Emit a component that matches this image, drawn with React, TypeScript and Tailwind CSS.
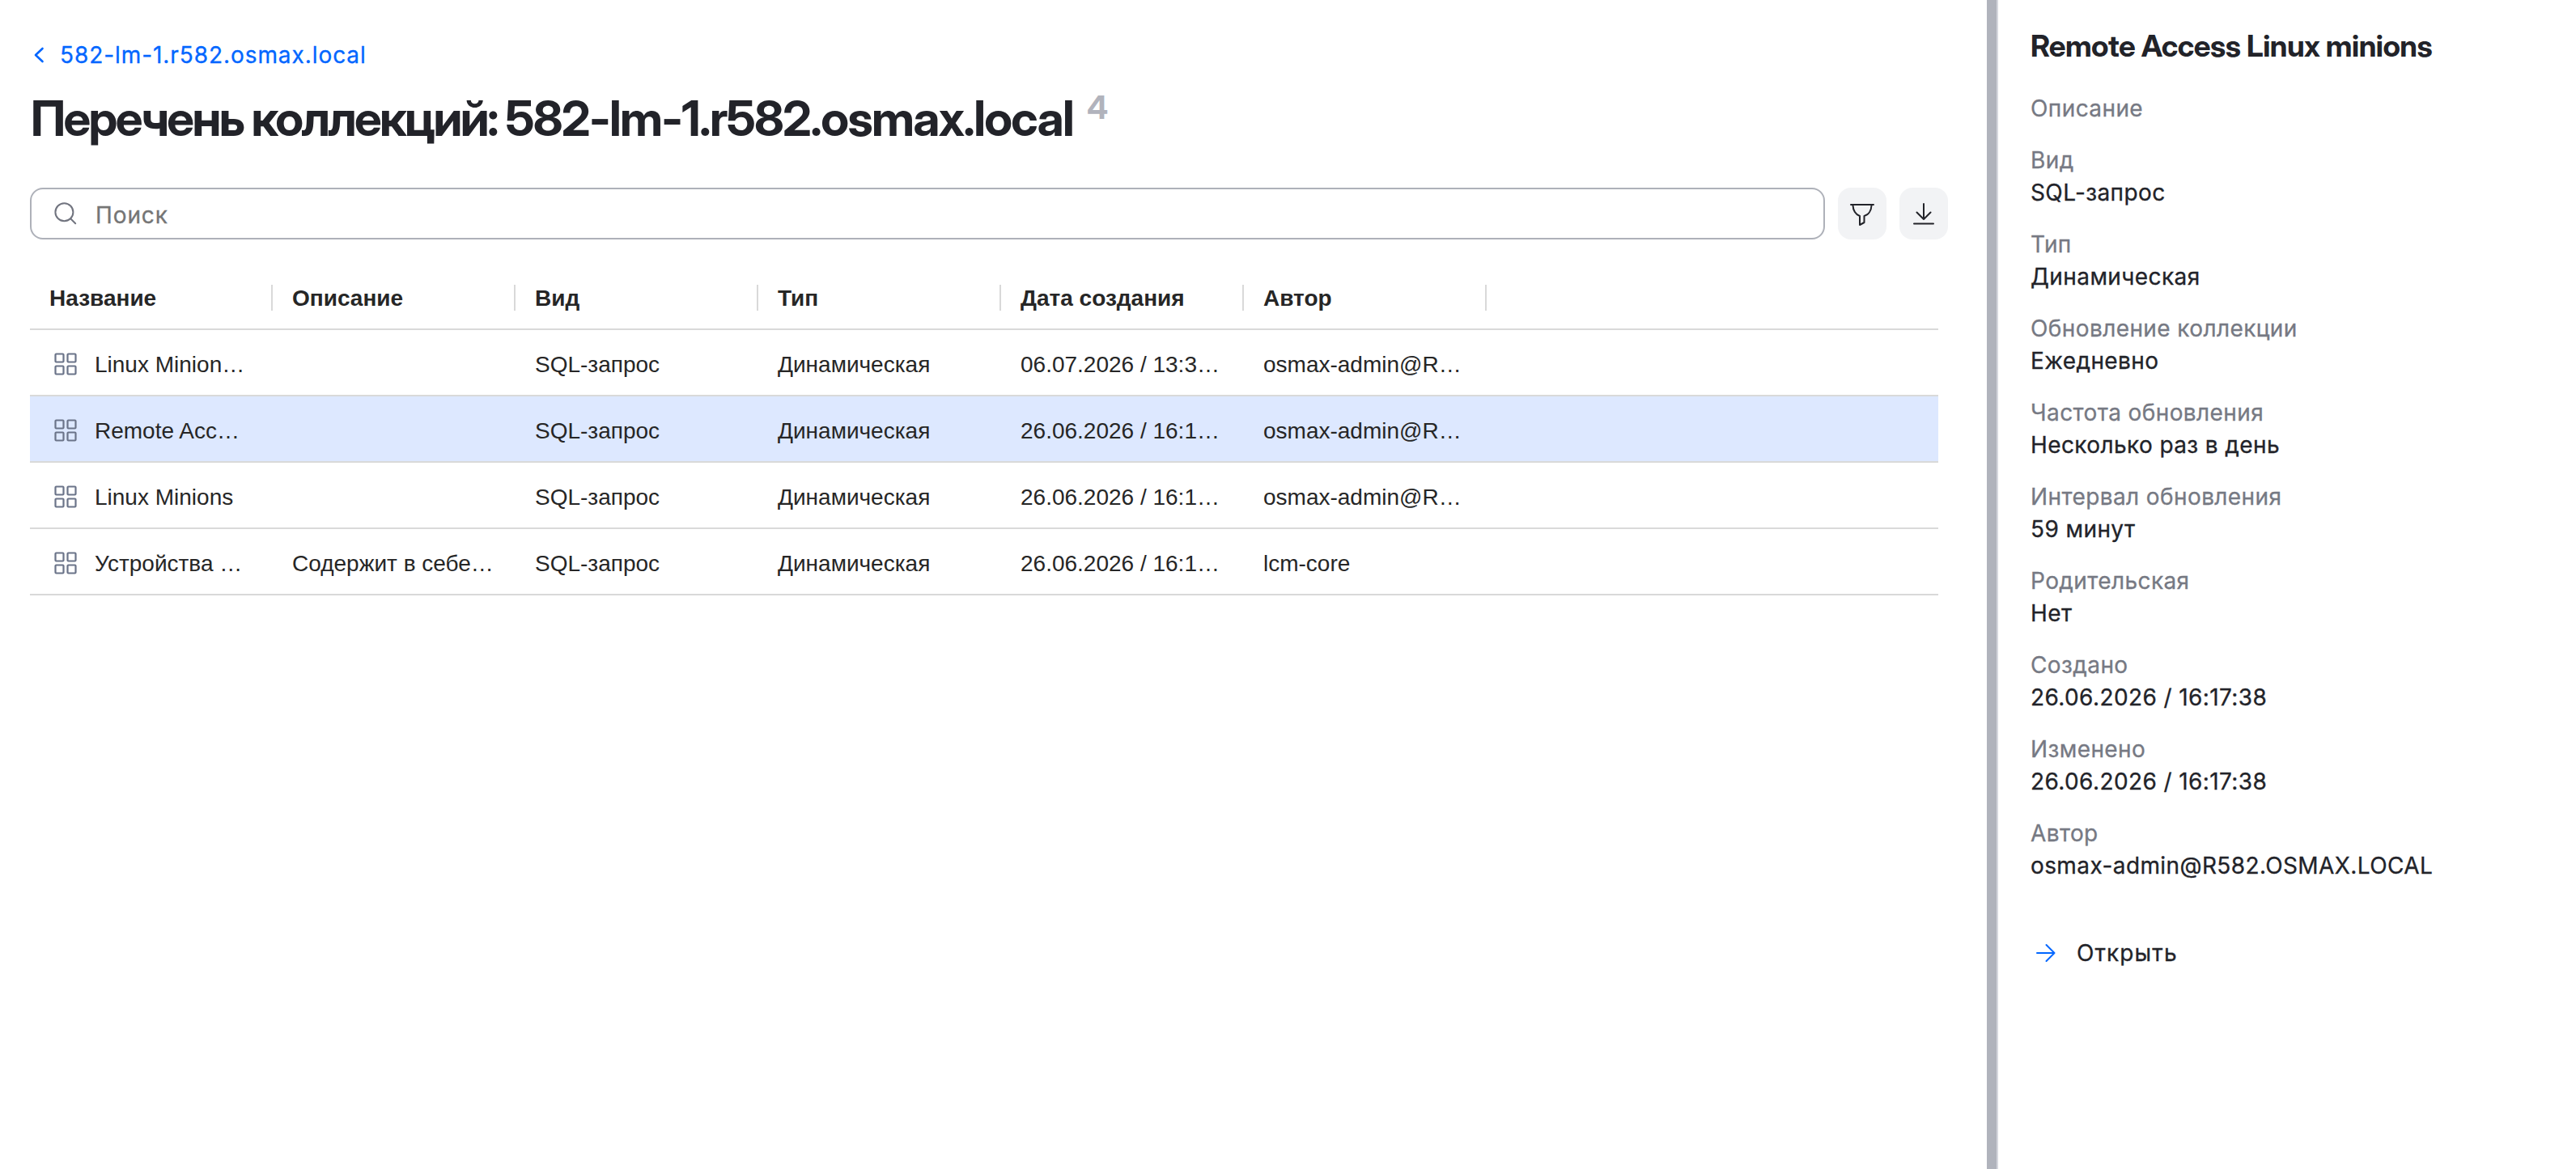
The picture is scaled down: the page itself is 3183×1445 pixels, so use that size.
import React from 'react';

interface Collection {
  name: string;
  description: string;
  kind: string;
  type: string;
  created: string;
  author: string;
}

const columns = ['Название', 'Описание', 'Вид', 'Тип', 'Дата создания', 'Автор'];

const collections: Collection[] = [
  { name: 'Linux Minion…', description: '', kind: 'SQL-запрос', type: 'Динамическая', created: '06.07.2026 / 13:3…', author: 'osmax-admin@R…' },
  { name: 'Remote Acc…', description: '', kind: 'SQL-запрос', type: 'Динамическая', created: '26.06.2026 / 16:1…', author: 'osmax-admin@R…' },
  { name: 'Linux Minions', description: '', kind: 'SQL-запрос', type: 'Динамическая', created: '26.06.2026 / 16:1…', author: 'osmax-admin@R…' },
  { name: 'Устройства …', description: 'Содержит в себе…', kind: 'SQL-запрос', type: 'Динамическая', created: '26.06.2026 / 16:1…', author: 'lcm-core' },
];

const details = [
  { label: 'Описание', value: '' },
  { label: 'Вид', value: 'SQL-запрос' },
  { label: 'Тип', value: 'Динамическая' },
  { label: 'Обновление коллекции', value: 'Ежедневно' },
  { label: 'Частота обновления', value: 'Несколько раз в день' },
  { label: 'Интервал обновления', value: '59 минут' },
  { label: 'Родительская', value: 'Нет' },
  { label: 'Создано', value: '26.06.2026 / 16:17:38' },
  { label: 'Изменено', value: '26.06.2026 / 16:17:38' },
  { label: 'Автор', value: 'osmax-admin@R582.OSMAX.LOCAL' },
];

const SELECTED = 1;

const ChevronIcon = () => (
  <svg className="w-4 h-6" viewBox="0 0 16 24" fill="none" stroke="currentColor" strokeWidth="2.6" strokeLinecap="round" strokeLinejoin="round">
    <path d="M12.500 4L4 12l8.500 8" />
  </svg>
);

const SearchIcon = () => (
  <svg className="w-8 h-8 text-[#71747f]" viewBox="0 0 32 32" fill="none" stroke="currentColor" strokeWidth="2" strokeLinecap="round">
    <circle cx="14.4" cy="14.2" r="11" />
    <path d="M22.2 22.2l6 6" />
  </svg>
);

const FilterIcon = () => (
  <svg className="w-8 h-8" viewBox="0 0 32 32" fill="none" stroke="currentColor" strokeWidth="2" strokeLinecap="round" strokeLinejoin="round">
    <path d="M2 5H30M4.500 5C4.500 12 8 17.500 13 19V30L18.500 27V19C24 17.500 27.500 12 27.500 5" />
  </svg>
);

const DownloadIcon = () => (
  <svg className="w-8 h-8" viewBox="0 0 32 32" fill="none" stroke="currentColor" strokeWidth="2" strokeLinecap="round" strokeLinejoin="round">
    <path d="M16 4v19M7.500 14.500L16 23l8.500-8.500M4 28.500h24" />
  </svg>
);

const GridIcon = () => (
  <svg className="-mt-0.5 w-8 h-8 shrink-0 text-[#6b7489]" viewBox="0 0 32 32" fill="none" stroke="currentColor" strokeWidth="2.2">
    <rect x="3.500" y="3.500" width="10" height="10" rx="1" />
    <rect x="18.500" y="3.500" width="10" height="10" rx="1" />
    <rect x="3.500" y="18.500" width="10" height="10" rx="1" />
    <rect x="18.500" y="18.500" width="10" height="10" rx="1" />
  </svg>
);

const ArrowIcon = () => (
  <svg className="w-8 h-8 text-[#0066ff]" viewBox="0 0 32 32" fill="none" stroke="currentColor" strokeWidth="2" strokeLinecap="round" strokeLinejoin="round">
    <path d="M6 16h21.500M17.500 6l10 10-10 10" />
  </svg>
);

const CollectionsTable: React.FC = () => (
  <div className="mt-8 w-[2358px] font-['Liberation_Sans',sans-serif] text-[28px] leading-10 text-[#262626]">
    <div className="flex h-20 items-center border-b-2 border-[#d9d9d9] pt-0.5 font-bold">
      {columns.map((title) => (
        <div key={title} className="flex h-8 w-[300px] items-center border-r-2 border-[#d9d9d9] pl-6 pt-0.5">
          {title}
        </div>
      ))}
    </div>
    {collections.map((item, index) => (
      <div
        key={index}
        className={`flex h-[82px] items-center whitespace-nowrap border-b-2 border-[#d9d9d9] pt-1.5 ${index === SELECTED ? 'bg-[#dde8ff]' : ''}`}
      >
        <div className="flex w-[300px] items-center pl-7">
          <GridIcon />
          <span className="ml-5">{item.name}</span>
        </div>
        <div className="w-[300px] pl-6">{item.description}</div>
        <div className="w-[300px] pl-6">{item.kind}</div>
        <div className="w-[300px] pl-6">{item.type}</div>
        <div className="w-[300px] pl-6">{item.created}</div>
        <div className="w-[300px] pl-6">{item.author}</div>
      </div>
    ))}
  </div>
);

const DetailsPanel: React.FC = () => (
  <aside className="flex-1 border-l-2 border-[#d5d7de] bg-white pl-10 pt-8 tracking-[0.4px]">
    <h2 className="font-['Inter_Display','Inter',sans-serif] text-[37px] font-bold leading-[50px] tracking-[-0.5px] whitespace-nowrap">
      Remote Access Linux minions
    </h2>
    <dl className="mt-8 flex flex-col gap-6 [-webkit-text-stroke:0.3px]">
      {details.map(({ label, value }) => (
        <div key={label} className="leading-10">
          <dt className="text-[#767983]">{label}</dt>
          {value && <dd>{value}</dd>}
        </div>
      ))}
    </dl>
    <button className="mt-[68px] flex items-center gap-[23px] pl-0.5 leading-10 tracking-[1.1px] [-webkit-text-stroke:0.3px]">
      <ArrowIcon />
      Открыть
    </button>
  </aside>
);

const App: React.FC = () => {
  return (
    <div className="flex h-[1445px] w-[3183px] overflow-hidden bg-white font-['Inter',sans-serif] text-[28px] text-[#222329]">
      <main className="w-[2455px] pl-[37px] pt-12">
        <a className="flex h-10 items-center gap-[18px] pl-[3px] leading-10 tracking-[0.93px] text-[#0066ff] [-webkit-text-stroke:0.3px]">
          <ChevronIcon />
          582-lm-1.r582.osmax.local
        </a>
        <h1 className="mt-[22px] flex h-[72px] items-start whitespace-pre pl-px font-['Inter_Display','Inter',sans-serif] text-[60px] font-bold leading-[72px]">
          <span className="tracking-[-2.6px]">Перечень коллекций: </span>
          <span className="tracking-[-1.7px]">582-lm-1.r582.osmax.local</span>
          <span className="ml-[17px] text-[40px] leading-[46px] text-[#b1b3bc]">4</span>
        </h1>
        <div className="mt-[50px] flex gap-4">
          <div className="flex h-16 w-[2218px] items-center rounded-2xl border-2 border-[#aeb1b9] pl-[26px]">
            <SearchIcon />
            <span className="ml-[21px] pt-1 tracking-[0.9px] text-[#757575] [-webkit-text-stroke:0.3px]">Поиск</span>
          </div>
          <button className="flex h-16 w-[60px] items-center justify-center rounded-2xl bg-[#f2f3f5]"><FilterIcon /></button>
          <button className="flex h-16 w-[60px] items-center justify-center rounded-2xl bg-[#f2f3f5]"><DownloadIcon /></button>
        </div>
        <CollectionsTable />
      </main>
      <div className="w-3 bg-[#b0b3bc]" />
      <DetailsPanel />
    </div>
  );
};

export default App;
